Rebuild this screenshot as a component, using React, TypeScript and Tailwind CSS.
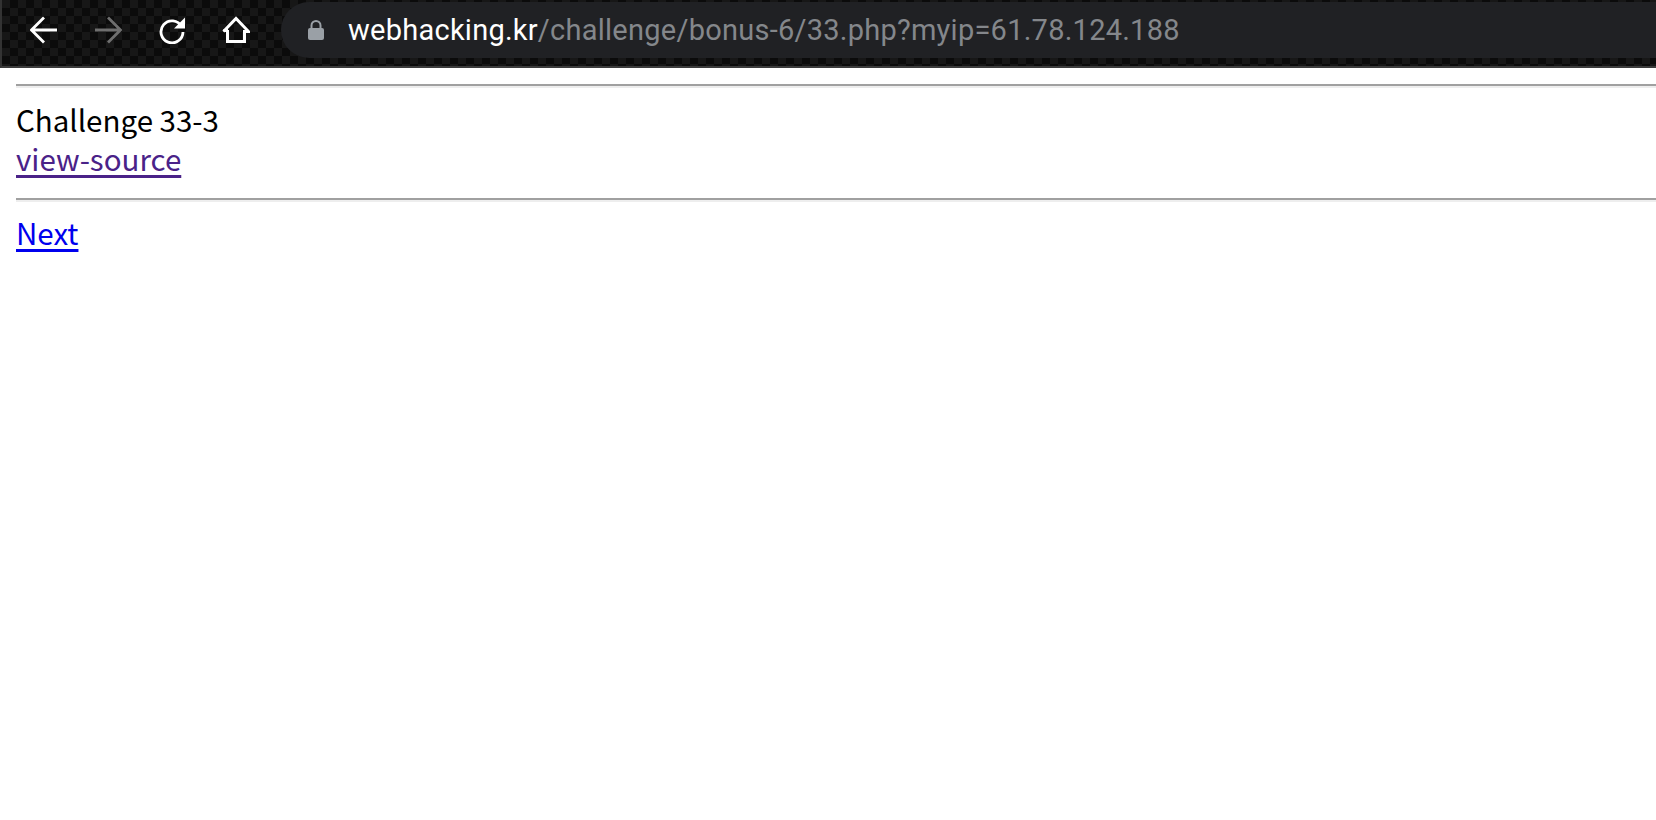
const Arrow = ({ flip, color }: { flip?: boolean; color: string }) => (
  <svg width="28" height="28" viewBox="0 0 28 28" fill="none" stroke={color} strokeWidth="2.8" style={{ transform: flip ? "scaleX(-1)" : undefined }}>
    <path d="M1.5 14H27M14 1.5L1.5 14L14 26.5" />
  </svg>
);

export default function App() {
  return (
    <div className="min-h-[820px] bg-white font-['Noto_Sans_CJK_KR','Noto_Sans',sans-serif]">
      <header className="flex h-[68px] border-b-2 border-l-2 border-b-[#3c3c3c] border-l-[#333333] bg-[repeating-conic-gradient(#0b0b0b_0_25%,#171717_0_50%)] bg-[length:16px_16px] pl-[28px] pt-[2px]">
        <div className="flex h-[56px] items-center">
          <Arrow color="#ffffff" />
          <div className="ml-[36px]"><Arrow flip color="#6f6f6f" /></div>
          <svg className="ml-[36px]" width="28" height="28" viewBox="0 0 28 28" fill="none">
            <path d="M23.6 10.5A11 11 0 1 0 25 16" stroke="#fff" strokeWidth="2.8" />
            <path d="M27 1.5V12.5H16Z" fill="#fff" />
          </svg>
          <svg className="ml-[36px]" width="28" height="28" viewBox="0 0 28 28" fill="none" stroke="#fff" strokeWidth="3">
            <path d="M5.5 14V25.5H22.5V14M1.5 15.5L14 2.5L26.5 15.5H21" />
            <path d="M1.5 14.5H6" />
          </svg>
        </div>
        <div className="ml-[31px] flex h-[56px] flex-1 items-center rounded-l-[28px] bg-[#202124] pl-[27px] text-[29px] tracking-[0.25px] font-['Roboto','Liberation_Sans',sans-serif]">
          <svg width="16" height="22" viewBox="0 0 16 22" fill="none">
            <path d="M3.5 10V6.5a4.5 4.5 0 0 1 9 0V10" stroke="#9aa0a6" strokeWidth="2" />
            <rect x="0" y="9" width="16" height="12" rx="2" fill="#9aa0a6" />
          </svg>
          <span className="ml-[24px] translate-y-[1px] text-white">webhacking.kr</span>
          <span className="translate-y-[1px] text-[#84878b]">/challenge/bonus-6/33.php?myip=61.78.124.188</span>
        </div>
      </header>
      <main className="pl-[16px] pt-[16px] text-[29.5px] leading-[39px] text-black">
        <hr className="h-[4px] border-t-2 border-[#a0a0a0] bg-[#eeeeee]" />
        <div className="mt-[12px]">Challenge 33-3</div>
        <a href="#" className="block w-fit text-[#4a2288] underline decoration-[3px] underline-offset-[4px]">view-source</a>
        <hr className="mt-[20px] h-[4px] border-t-2 border-[#a0a0a0] bg-[#eeeeee]" />
        <a href="#" className="mt-[11px] block w-fit text-[#0000ee] underline decoration-[3px] underline-offset-[4px]">Next</a>
      </main>
    </div>
  );
}
